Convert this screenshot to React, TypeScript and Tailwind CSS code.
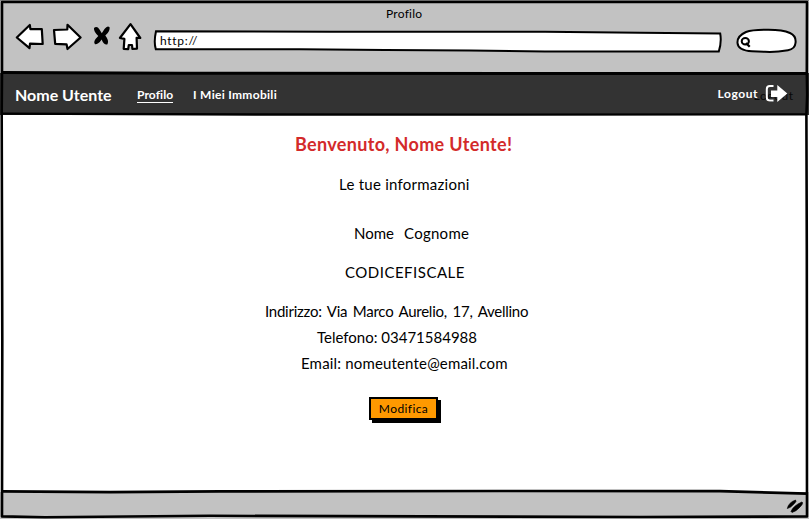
import type { ReactNode } from "react";

const font = "font-['Lato','Liberation_Sans',sans-serif]";

function ToolbarIcons() {
  return (
    <svg
      className="block shrink-0 self-start"
      width="136"
      height="42"
      viewBox="10 15 136 42"
      fill="#fff"
      stroke="#000"
      strokeWidth="2.2"
      strokeLinejoin="round"
      strokeLinecap="round"
    >
      <path d="M16.8 37.5 L29.8 25 L30.4 29.2 L41.8 29 L42.7 44 L30 43.6 L29.5 48.2 Z" />
      <path d="M54 30 L67.3 29.5 L67.5 24.8 L80.6 37.5 L67.5 49 L66.6 44.4 L55.2 43.8 Z" />
      <path
        d="M94 28 Q97 25.5 99.5 29.5 L101.8 33.2 L104.5 29 Q107.5 25 109.6 27.3 Q110.3 31.5 105.3 35.6 Q109.5 41 107.5 44.3 Q104 45.5 101.6 39.5 Q98.5 44.5 95 44.3 Q92.5 41.5 98.3 36 Q93.5 31.5 94 28 Z"
        fill="#000"
        stroke="none"
      />
      <path d="M130.5 24.2 L140.3 38 L136.6 37.8 L137 48.6 L132.4 49 L132 45 L128.8 45 L128.2 49.2 L123.7 48.8 L124.4 38.8 L119.9 38 Z" />
    </svg>
  );
}

function AddressBar() {
  return (
    <div className="relative ml-[7px] h-6 w-[570px] shrink-0">
      <svg className="absolute inset-0" width="570" height="24" viewBox="153 29 570 24" fill="#fff" stroke="#000" strokeWidth="2">
        <path d="M156 31.3 L330 31.8 L545 31.8 L640 32.8 L720.2 33.5 Q721.8 42 718.8 51.5 L545 51.4 L470 50.5 L385 50 L300 49.2 L155.8 49.2 Q153.6 42 156 31.3 Z" />
      </svg>
      <span className="relative block pl-[7px] text-[12px] leading-6 tracking-[0.7px]">http://</span>
    </div>
  );
}

function SearchBox() {
  return (
    <svg className="ml-[13px] block shrink-0" width="62" height="28" viewBox="736 27 62 28" fill="#fff" stroke="#000" strokeWidth="2">
      <path d="M737.5 43 Q737 36 746 32 Q752 29.8 766 29.8 Q782 29.5 790 33 Q796.5 36 795.5 43 Q795 49 788 50.2 Q775 52.5 765 51.8 L752 51.3 Q738 50.5 737.5 43 Z" />
      <ellipse cx="745.3" cy="41.3" rx="3.6" ry="3.2" fill="none" />
      <path d="M746 43 L749.7 46.8" strokeWidth="2.3" />
    </svg>
  );
}

function LogoutIcon() {
  return (
    <svg className="relative block" width="24" height="20" viewBox="765 85 24 20">
      <path d="M773.5 87 H769.8 Q766.8 87 766.8 90 V98.5 Q766.8 101.5 769.8 101.5 H773.5" fill="none" stroke="#fff" strokeWidth="2" />
      <path d="M771 91.5 H777.3 V86 L787.3 94.5 L777.3 103 V98 H771 Z" fill="#fff" />
    </svg>
  );
}

function Frame() {
  return (
    <svg className="pointer-events-none absolute inset-0" width="809" height="519" viewBox="0 0 809 519" fill="none" stroke="#000" strokeLinejoin="round">
      <path d="M0 .5 H809" stroke="#888" strokeWidth="1" />
      <path d="M2 2 H807 L806.8 72 L807.2 95 L806.4 115 L806.8 250 L807 516.5 L640 517 L210 515.8 L45 517.3 L2 516.4 L2.3 340 L1.7 115 L2 72 Z" strokeWidth="2.6" />
      <path d="M2 72.6 L180 73.2 L520 73.4 L807 73.6" strokeWidth="3" />
      <path d="M2 113.7 L260 114.5 L500 114.6 L807 114.4" strokeWidth="2.3" />
      <path d="M2 491.3 L110 492.2 L220 491.4 L500 491 L720 491.2 L807 493.7" strokeWidth="2.7" />
      <path
        d="M787.3 508.6 Q788.5 502.5 795.5 500 Q797.2 501 794 504 Q790.5 508 787.3 508.6 Z M791 511.5 Q793 506 801.8 502 Q803.8 502.6 801 506 Q796.5 511.5 792 512.5 Z"
        fill="#000"
        strokeWidth="0.6"
      />
    </svg>
  );
}

function Line({ className, children }: { className: string; children: ReactNode }) {
  return <p className={`whitespace-pre text-[15px] leading-[26px] ${className}`}>{children}</p>;
}

export default function App() {
  return (
    <div className={`relative flex h-[519px] w-[809px] flex-col overflow-hidden bg-white text-black ${font}`}>
      <header className="h-[73px] bg-[#c2c2c2]">
        <h1 className="h-[15px] pt-[6px] pl-[386px] text-[12px] leading-4 tracking-[0.25px]">Profilo</h1>
        <div className="flex h-[52px] items-center pl-[10px]">
          <ToolbarIcons />
          <AddressBar />
          <SearchBox />
        </div>
      </header>
      <nav className="flex h-[42px] items-center bg-[#333] pl-[15px] text-[12px] font-bold text-white">
        <span className="w-[122px] pt-[2px] text-[16px]">Nome Utente</span>
        <a className="w-[56px] pt-[2px] leading-4">
          <span className="border-b border-white tracking-[0.1px]">Profilo</span>
        </a>
        <a className="pt-[2px] leading-4 tracking-[0.3px]">I Miei Immobili</a>
        <div className="relative mr-[20px] ml-auto flex items-center">
          <span className="absolute top-[4px] left-[36px] leading-4 font-normal tracking-[0.6px] text-[#080808]">Logout</span>
          <span className="relative mr-[7px] leading-4 tracking-[0.55px]">Logout</span>
          <LogoutIcon />
        </div>
      </nav>
      <main className="flex-1 pt-[16px]">
        <h2 className="pl-[295px] text-[18px] leading-[26px] font-bold tracking-[0.33px] text-[#d32a2a]">Benvenuto, Nome Utente!</h2>
        <Line className="mt-[14px] pl-[339px] tracking-[0.25px]">Le tue informazioni</Line>
        <Line className="mt-[23px] flex gap-[10px] pl-[354px]">
          <span>Nome</span>
          <span className="tracking-[0.28px]">Cognome</span>
        </Line>
        <Line className="mt-[13px] pl-[345px] tracking-[0.5px]">CODICEFISCALE</Line>
        <Line className="mt-[13px] pl-[265px] tracking-[-0.25px] [word-spacing:2px]">Indirizzo: Via Marco Aurelio, 17, Avellino</Line>
        <Line className="pl-[317px]">Telefono: 03471584988</Line>
        <Line className="pl-[301px] tracking-[0.17px]">Email: nomeutente@email.com</Line>
        <button className="mt-[21px] ml-[369px] flex h-[23px] w-[69px] items-center justify-center border-2 border-black bg-[#ff9900] text-[12px] tracking-[0.4px] shadow-[3px_3px_0_#000]">
          Modifica
        </button>
      </main>
      <footer className="h-[27px] bg-[#c2c2c2]" />
      <Frame />
    </div>
  );
}
